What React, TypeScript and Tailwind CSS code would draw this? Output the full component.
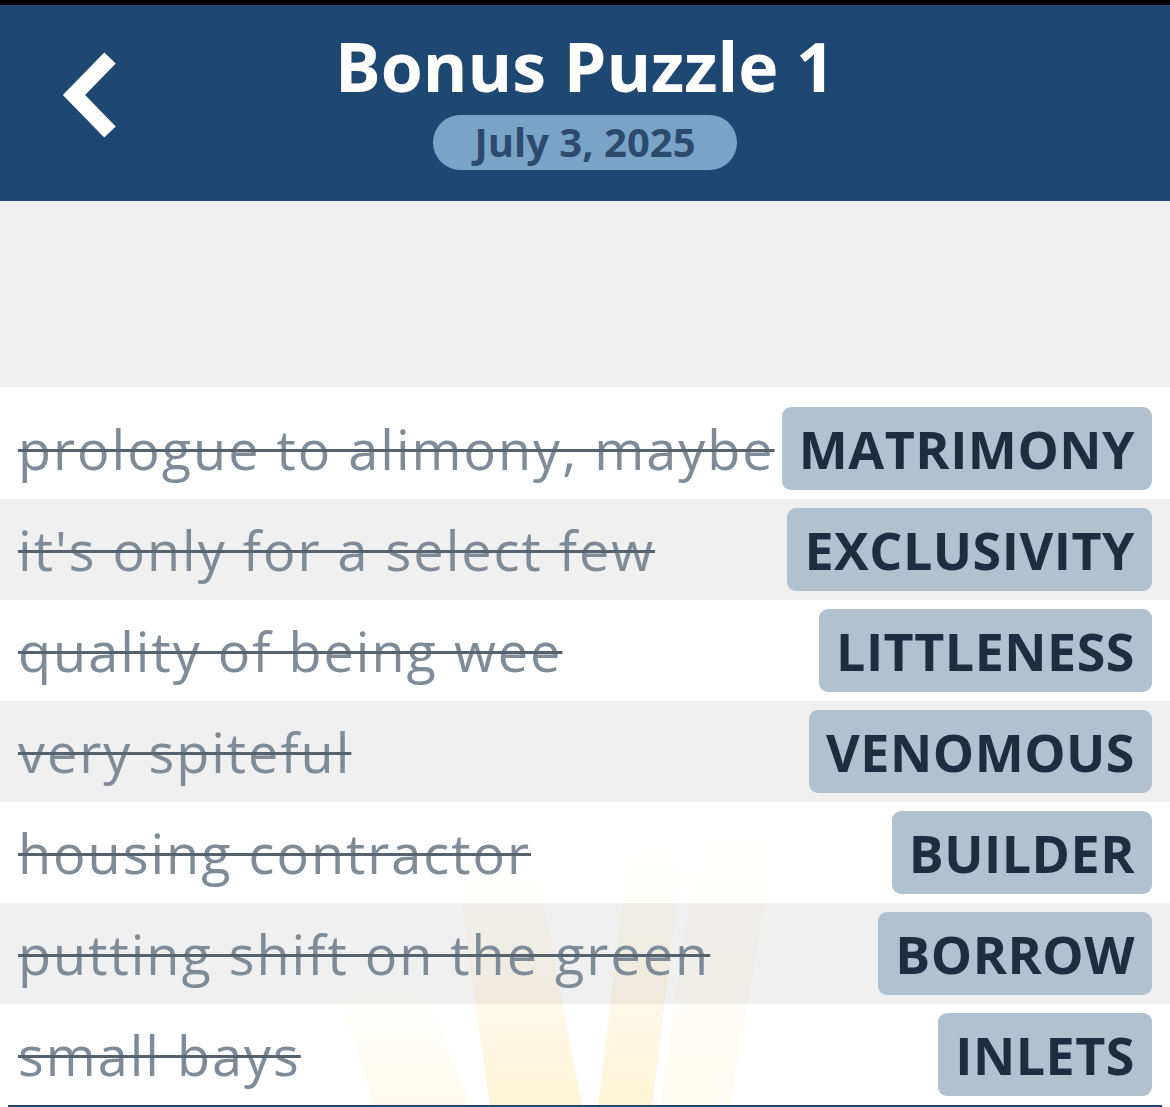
import React from 'react';

const clues = [
  { clue: 'prologue to alimony, maybe', answer: 'MATRIMONY' },
  { clue: "it's only for a select few", answer: 'EXCLUSIVITY' },
  { clue: 'quality of being wee', answer: 'LITTLENESS' },
  { clue: 'very spiteful', answer: 'VENOMOUS' },
  { clue: 'housing contractor', answer: 'BUILDER' },
  { clue: 'putting shift on the green', answer: 'BORROW' },
  { clue: 'small bays', answer: 'INLETS' },
];

// faint sunburst behind the clue list
function SunRays() {
  return (
    <svg
      className="pointer-events-none absolute inset-0 h-full w-full"
      viewBox="0 0 1170 719"
      preserveAspectRatio="none"
    >
      <defs>
        <linearGradient id="ray" x1="0" y1="1" x2="0" y2="0">
          <stop offset="0" stopColor="#fde6a4" stopOpacity="0.45" />
          <stop offset="0.55" stopColor="#fdefc6" stopOpacity="0.28" />
          <stop offset="1" stopColor="#fff8e0" stopOpacity="0" />
        </linearGradient>
      </defs>
      <polygon points="455,470 535,470 582,719 490,719" fill="url(#ray)" />
      <polygon points="630,450 685,450 652,719 598,719" fill="url(#ray)" />
      <polygon points="335,600 425,600 470,719 375,719" fill="url(#ray)" opacity="0.5" />
      <polygon points="700,430 780,430 730,719 660,719" fill="url(#ray)" opacity="0.35" />
    </svg>
  );
}

export default function App() {
  return (
    <div
      className="flex h-[1107px] w-[1170px] flex-col overflow-hidden bg-white"
      style={{ fontFamily: '"Open Sans", "Noto Sans", sans-serif' }}
    >
      <div className="h-[5px] bg-black" />
      <header className="relative flex h-[197px] flex-col items-center bg-[#1e4772]">
        <button className="absolute left-[58px] top-[45px]">
          <svg width="62" height="92" viewBox="0 0 62 92" className="block">
            <polyline
              points="52,8 16,45 52,82"
              fill="none"
              stroke="white"
              strokeWidth="16"
              strokeLinecap="butt"
              strokeLinejoin="miter"
            />
          </svg>
        </button>
        <h1 className="mt-[22px] text-[68px] font-bold leading-[78px] text-white">
          Bonus Puzzle 1
        </h1>
        <div className="mt-[10px] flex h-[55px] w-[304px] items-center justify-center rounded-full bg-[#7aa3c8]">
          <span className="text-[40px] font-bold leading-none text-[#2b4a6e]">
            July 3, 2025
          </span>
        </div>
      </header>

      <div className="h-[186px] bg-[#f0f0f0]" />

      <div className="relative flex flex-1 flex-col pt-[11px]">
        <SunRays />
        {clues.map((c, i) => (
          <div
            key={c.answer}
            className={
              'relative flex h-[101px] shrink-0 items-center justify-between px-[18px] ' +
              (i % 2 === 1 ? 'bg-black/[0.06]' : '')
            }
          >
            <span className="whitespace-nowrap text-[54px] leading-none tracking-[2px] text-[#7f8b97] line-through decoration-[#56636f] decoration-[3px]">
              {c.clue}
            </span>
            <span className="flex h-[83px] items-center rounded-[9px] bg-[#b0c2cf] px-[17px] text-[52px] font-bold leading-none tracking-[0.5px] text-[#1c2e40]">
              {c.answer}
            </span>
          </div>
        ))}
        <div className="relative mx-[8px] h-[2px] shrink-0 bg-[#1e4772]" />
      </div>
    </div>
  );
}
